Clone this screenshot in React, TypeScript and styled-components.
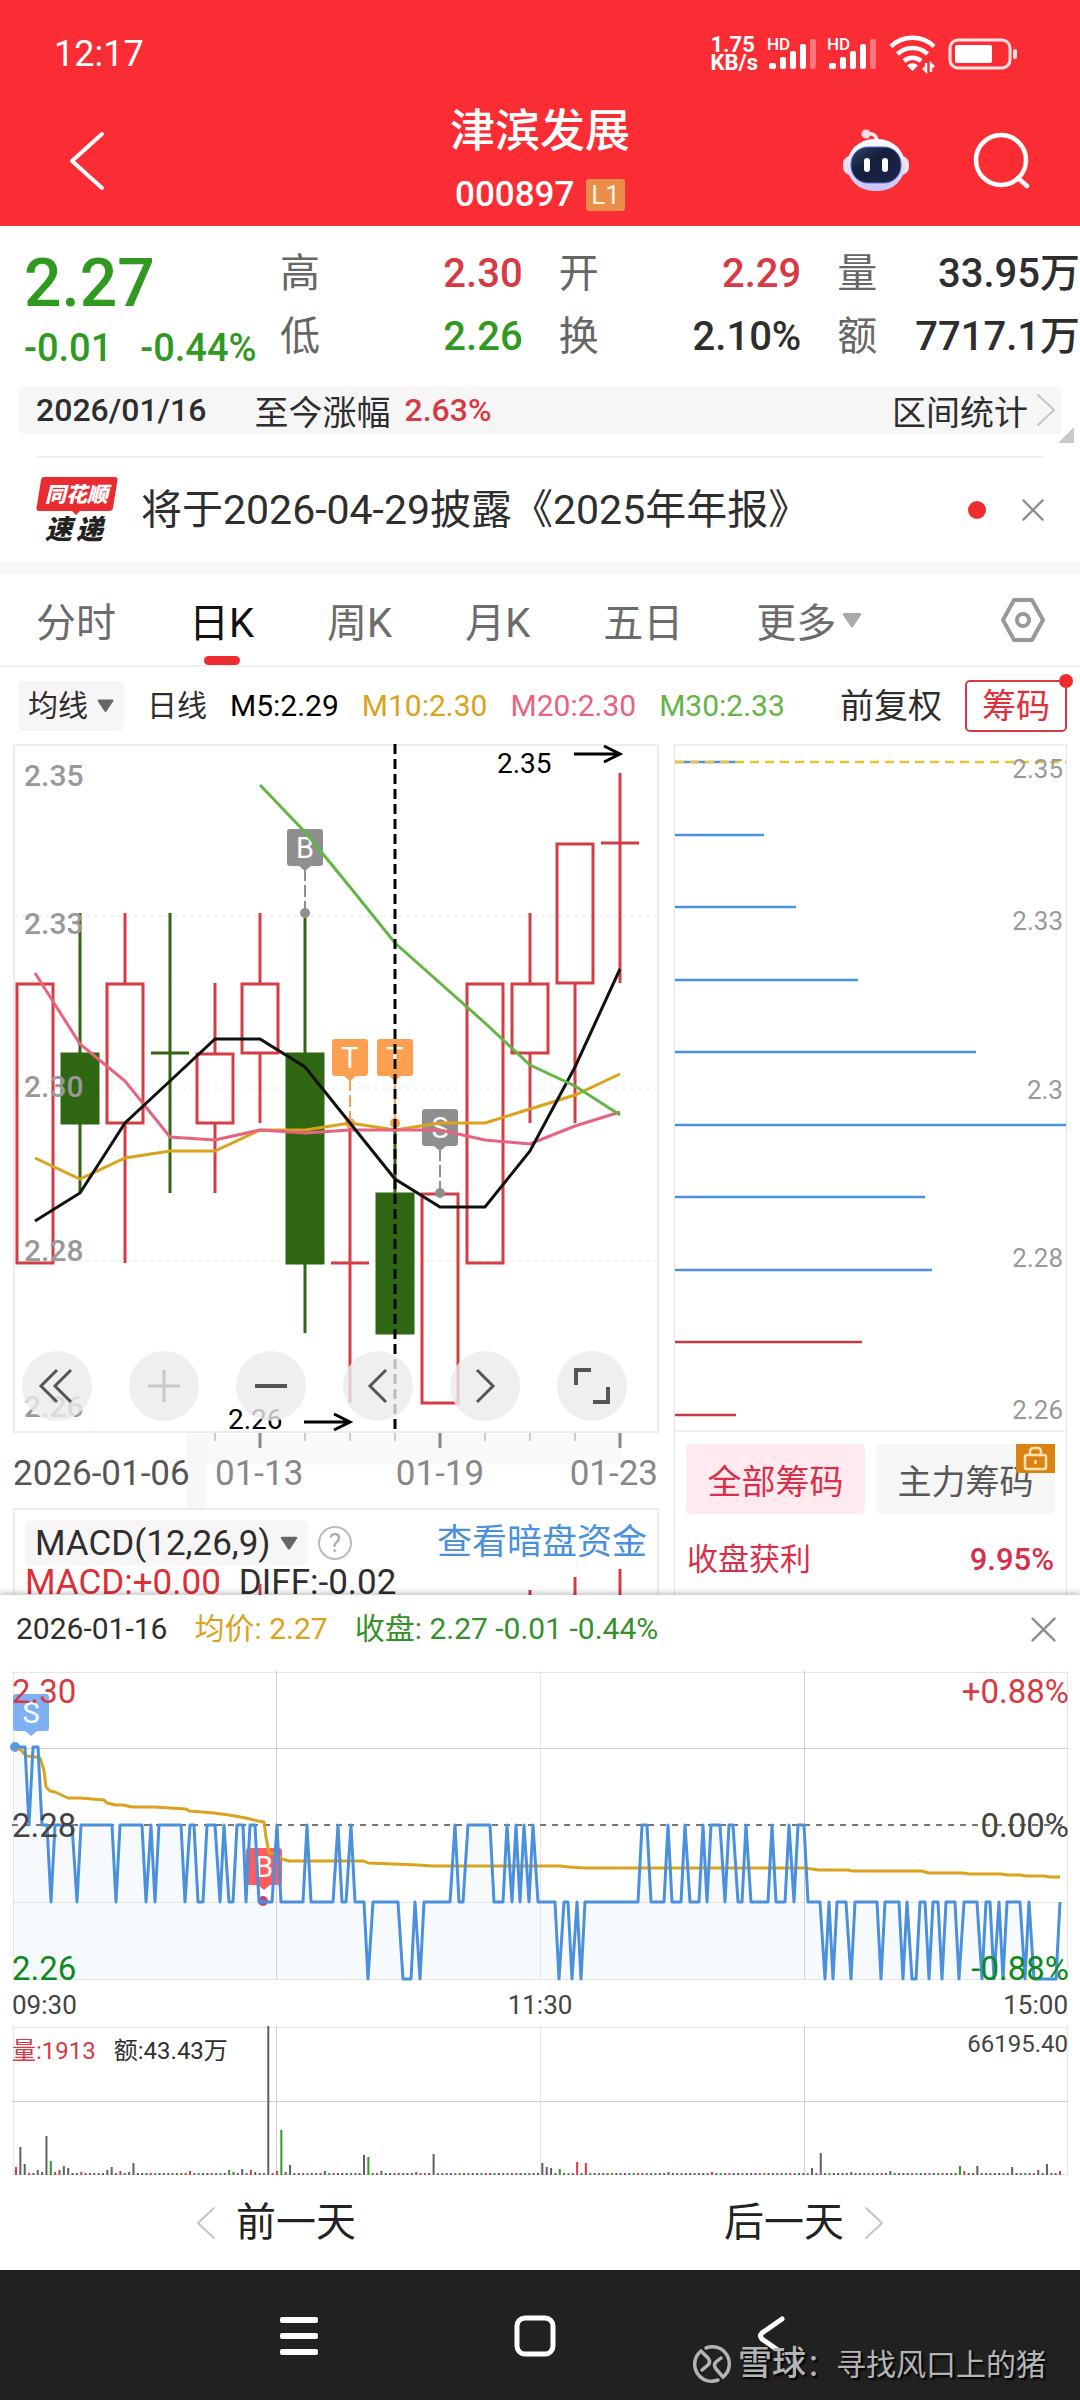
import React from "react";
import styled, { createGlobalStyle } from "styled-components";

const RED = "#d83a44";
const GREEN = "#2f9a1f";
const AMBER = "#dba21c";
const INK = "#2e2e2e";
const BLUE = "#4a90dd";
const FONT = 'Roboto, "Noto Sans CJK SC", sans-serif';

const GlobalStyle = createGlobalStyle`
  * { box-sizing: border-box; }
  body { margin: 0; background: #fff; font-family: ${FONT}; color: ${INK}; }
  button, select { font: inherit; color: inherit; border: 0; background: none; padding: 0; margin: 0; cursor: pointer; }
  svg { display: block; overflow: visible; }
  svg text { font-family: ${FONT}; }
  a { color: inherit; text-decoration: none; }
  dl, dd, dt, h1, p { margin: 0; font-weight: inherit; }
`;

const Page = styled.div`
  display: flex;
  flex-direction: column;
  width: 100%;
  overflow: hidden;
`;

/* ---------- header ---------- */

const Header = styled.header`
  background: #fa2d34;
  color: #fff;
  padding-bottom: 4px;
`;

const StatusBar = styled.div`
  display: flex;
  align-items: flex-end;
  justify-content: space-between;
  height: 76px;
  padding: 0 62px 0 54px;
`;

const Clock = styled.time`
  font-size: 36px;
  font-weight: 400;
  line-height: 44px;
`;

const StatusIcons = styled.div`
  display: flex;
  align-items: center;
  gap: 11px;
  height: 44px;
`;

const NetSpeed = styled.div`
  font-size: 22px;
  line-height: 18px;
  font-weight: 700;
`;

const TitleBar = styled.div`
  display: grid;
  grid-template-columns: 1fr auto 1fr;
  align-items: center;
  padding: 24px 50px 0;
`;

const IconButton = styled.button`
  display: flex;
  align-items: center;
`;

const BackButton = styled(IconButton)`
  padding-left: 18px;
`;

const TitleBlock = styled.div`
  display: flex;
  flex-direction: column;
  align-items: center;
`;

const Title = styled.h1`
  font-size: 45px;
  line-height: 64px;
  font-weight: 500;
`;

const CodeRow = styled.div`
  display: flex;
  align-items: center;
  gap: 12px;
  font-size: 35px;
  font-weight: 500;
  line-height: 54px;
  padding-top: 4px;
`;

const LevelBadge = styled.span`
  background: #ea8e4b;
  color: #fff3dc;
  border-radius: 3px;
  font-size: 26px;
  line-height: 32px;
  padding: 0 5px;
  font-weight: 400;
`;

const HeaderActions = styled.div`
  display: flex;
  align-items: center;
  justify-content: flex-end;
  gap: 62px;
`;

/* ---------- quote ---------- */

const Quote = styled.section`
  display: flex;
  padding-top: 16px;
  padding-bottom: 16px;
`;

const PriceBlock = styled.div`
  flex: 0 0 280px;
  padding-left: 24px;
  color: ${GREEN};
  font-weight: 500;
`;

const Price = styled.div`
  font-size: 66px;
  line-height: 84px;
`;

const Change = styled.div`
  display: flex;
  gap: 28px;
  font-size: 38px;
  line-height: 44px;
`;

const Stats = styled.dl`
  flex: 1;
  display: grid;
  grid-template-columns: repeat(3, 1fr);
  grid-template-rows: repeat(2, 63px);
  grid-auto-flow: column;
  column-gap: 36px;
`;

const Stat = styled.div<{ $color?: string }>`
  display: flex;
  justify-content: space-between;
  font-size: 40px;
  line-height: 63px;
  white-space: nowrap;
  dt { color: #666; }
  dd { color: ${(p) => p.$color || INK}; font-weight: 500; }
`;

const RangeBar = styled.div`
  position: relative;
  display: flex;
  align-items: center;
  justify-content: space-between;
  height: 48px;
  margin: 0 18px;
  padding: 0 6px 0 18px;
  background: #f6f6f7;
  border-radius: 6px;
  font-size: 34px;
`;

const RangeInfo = styled.div`
  display: flex;
  align-items: center;
`;

const RangeDate = styled.span`
  font-size: 32px;
  font-weight: 500;
  margin-right: 48px;
`;

const RangeGain = styled.span`
  color: ${RED};
  font-size: 32px;
  font-weight: 500;
  margin-left: 14px;
`;

const RangeLink = styled.a`
  display: flex;
  align-items: center;
  gap: 8px;
`;

const FoldCorner = styled.svg`
  position: absolute;
  right: -12px;
  bottom: -9px;
`;

const News = styled.section`
  display: flex;
  align-items: center;
  height: 106px;
  margin: 22px 36px 0;
  border-top: 2px solid #f0f0f0;
`;

const NewsLink = styled.a`
  flex: 1;
  margin-left: 22px;
  font-size: 41px;
  line-height: 60px;
`;

const NewsDot = styled.span`
  width: 18px;
  height: 18px;
  border-radius: 50%;
  background: #ee2d30;
  margin-right: 36px;
`;

/* ---------- tabs and indicators ---------- */

const Tabs = styled.nav`
  display: flex;
  align-items: center;
  gap: 73px;
  height: 105px;
  padding: 0 34px 0 36px;
  border-top: 12px solid #f7f7f7;
  border-bottom: 2px solid #f0f0f0;
`;

const Tab = styled.button<{ $active?: boolean }>`
  position: relative;
  display: flex;
  align-items: center;
  gap: 6px;
  height: 91px;
  font-size: 40px;
  color: ${(p) => (p.$active ? "#111" : "#6c6c6c")};
  &::after {
    content: "";
    display: ${(p) => (p.$active ? "block" : "none")};
    position: absolute;
    bottom: 0;
    left: 50%;
    margin-left: -18px;
    width: 36px;
    height: 9px;
    border-radius: 5px;
    background: #ee2d30;
  }
`;

const TabSettings = styled(IconButton)`
  margin-left: auto;
`;

const Legend = styled.div`
  display: flex;
  align-items: center;
  height: 77px;
  padding: 0 13px 0 18px;
  gap: 23px;
  font-size: 30px;
  line-height: 44px;
  white-space: nowrap;
`;

const Picker = styled.label<{ $height: number; $size: number }>`
  display: inline-flex;
  align-items: center;
  gap: 9px;
  height: ${(p) => p.$height}px;
  padding: 0 10px;
  background: #f7f5f6;
  border-radius: 6px;
  font-size: ${(p) => p.$size}px;
  select { appearance: none; outline: 0; }
`;

const MaValue = styled.span<{ $color: string }>`
  color: ${(p) => p.$color};
`;

const Adjust = styled.button`
  margin-left: auto;
  font-size: 34px;
`;

const ChipToggle = styled.button`
  position: relative;
  height: 52px;
  padding: 0 15px;
  border: 2px solid ${RED};
  border-radius: 5px;
  color: #e0303c;
  font-size: 34px;
  line-height: 46px;
  &::after {
    content: "";
    position: absolute;
    top: -8px;
    right: -8px;
    width: 14px;
    height: 14px;
    border-radius: 50%;
    background: #ee2d30;
  }
`;

/* ---------- chart area ---------- */

const ChartArea = styled.main`
  display: grid;
  grid-template-columns: 646fr 393fr;
  gap: 15px;
  padding: 0 13px;
`;

const ChartColumn = styled.div`
  display: flex;
  flex-direction: column;
  min-width: 0;
`;

const CandleWrap = styled.div`
  position: relative;
`;

const FullSvg = styled.svg`
  width: 100%;
  height: auto;
`;

const ChartControls = styled.div`
  position: absolute;
  left: 9px;
  bottom: 87px;
  display: flex;
  gap: 37px;
`;

const RoundButton = styled.button`
  width: 70px;
  height: 70px;
  border-radius: 50%;
  background: rgba(235, 235, 235, 0.8);
  display: flex;
  align-items: center;
  justify-content: center;
`;

const MacdPanel = styled.section`
  position: relative;
  height: 87px;
  overflow: hidden;
  border: 2px solid #ececec;
  border-bottom: 0;
  padding: 10px 10px 0;
`;

const MacdHead = styled.div`
  display: flex;
  align-items: center;
  gap: 10px;
  height: 46px;
`;

const HelpButton = styled.button`
  width: 34px;
  height: 34px;
  border: 2px solid #bbb;
  border-radius: 50%;
  color: #aaa;
  font-size: 26px;
  line-height: 30px;
`;

const DarkPoolLink = styled.a`
  margin-left: auto;
  color: ${BLUE};
  font-size: 35px;
  line-height: 46px;
`;

const MacdValues = styled.p`
  display: flex;
  gap: 18px;
  font-size: 35px;
  line-height: 34px;
  span:first-child { color: #dd3036; }
`;

const MacdBars = styled.svg`
  position: absolute;
  left: 0;
  bottom: 0;
  width: 100%;
  height: 26px;
`;

const ChipPanel = styled.section`
  border-left: 1px solid #e4e4e4;
  border-right: 1px solid #e4e4e4;
  flex: 1;
`;

const ChipTabs = styled.div`
  display: grid;
  grid-template-columns: 1fr 1fr;
  gap: 11px;
  padding: 12px 11px 0;
`;

const ChipTab = styled.button<{ $active?: boolean }>`
  position: relative;
  height: 70px;
  border-radius: 5px;
  font-size: 34px;
  background: ${(p) => (p.$active ? "#ffeaef" : "#f6f6f6")};
  color: ${(p) => (p.$active ? "#d8304a" : "#585858")};
`;

const LockBadge = styled.svg`
  position: absolute;
  top: 0;
  right: 0;
`;

const ProfitRow = styled.p`
  display: flex;
  justify-content: space-between;
  padding: 0 12px;
  margin-top: 22px;
  color: #d8304a;
  font-size: 31px;
  line-height: 48px;
  b { font-weight: 500; }
`;

/* ---------- bottom sheet ---------- */

const Sheet = styled.section`
  position: relative;
  background: #fff;
  padding: 0 12px;
  box-shadow: 0 -2px 6px rgba(0, 0, 0, 0.25);
`;

const SheetHead = styled.div`
  display: flex;
  align-items: center;
  gap: 27px;
  height: 68px;
  padding: 0 12px 0 4px;
  margin-bottom: 8px;
  font-size: 30px;
  line-height: 44px;
  white-space: nowrap;
`;

const SheetValue = styled.span<{ $color: string }>`
  color: ${(p) => p.$color};
`;

const SheetClose = styled(IconButton)`
  margin-left: auto;
`;

const TimeAxis = styled.div`
  display: flex;
  justify-content: space-between;
  height: 46px;
  padding-top: 10px;
  font-size: 26px;
  line-height: 30px;
  color: #444;
`;

const VolumeWrap = styled.div`
  position: relative;
`;

const VolumeLabels = styled.div`
  position: absolute;
  top: 0;
  left: 0;
  right: 0;
  display: flex;
  align-items: flex-start;
  gap: 18px;
  font-size: 24px;
  line-height: 34px;
  padding-top: 8px;
`;

const VolumeValue = styled.span`
  color: ${RED};
`;

const VolumeMax = styled.span`
  margin-left: auto;
  line-height: 20px;
  color: #444;
`;

const DayNav = styled.div`
  display: grid;
  grid-template-columns: 1fr 1fr;
  justify-items: center;
  align-items: center;
  height: 95px;
`;

const DayButton = styled.button`
  display: flex;
  align-items: center;
  gap: 20px;
  font-size: 40px;
  line-height: 56px;
  color: #222;
`;

const SystemNav = styled.footer`
  position: relative;
  display: flex;
  justify-content: center;
  align-items: center;
  gap: 192px;
  height: 131px;
  padding-right: 10px;
  background: #212121;
`;

const SystemButton = styled.button`
  display: flex;
  align-items: center;
  justify-content: center;
  width: 44px;
  height: 44px;
`;

const Credit = styled.div`
  position: absolute;
  right: 34px;
  bottom: 12px;
  display: flex;
  align-items: center;
  gap: 7px;
  color: #b4b4b4;
  font-size: 30px;
  line-height: 48px;
  text-shadow: 2px 2px 2px #000;
  strong { font-size: 34px; font-weight: 500; }
`;

/* ---------- icons ---------- */

const Signal = () => (
  <svg width="49" height="36" viewBox="0 0 49 36" fill="#fff">
    <text x="-2" y="14" fontSize="17" fontWeight="500">HD</text>
    <rect x="0" y="27" width="7" height="6" rx="2" />
    <rect x="11" y="21" width="6" height="12" rx="2" />
    <rect x="21" y="15" width="6" height="18" rx="2" />
    <rect x="31" y="8" width="6" height="25" rx="2" />
    <rect x="41" y="3" width="6" height="30" rx="2" opacity="0.35" />
  </svg>
);

const Wifi = () => (
  <svg width="48" height="38" viewBox="0 0 48 38" fill="none" stroke="#fff" strokeWidth="4.500">
    <path d="M2 11.5 A31 31 0 0 1 45 11.5" />
    <path d="M8.500 19 A22 22 0 0 1 38.500 19" />
    <path d="M15 26 A13 13 0 0 1 32 26" />
    <path d="M23.500 36 L18 30.500 A8 8 0 0 1 29 30.500 Z" fill="#fff" stroke="none" />
    <path d="M37 28 V36 L34 33 M42 37 V29 L45 32" strokeWidth="2.500" />
  </svg>
);

const Battery = () => (
  <svg width="70" height="32" viewBox="0 0 70 32" fill="none">
    <rect x="2" y="2" width="60" height="28" rx="8" stroke="#ffe3e3" strokeWidth="3" />
    <rect x="7" y="7" width="37" height="18" rx="2" fill="#fff" />
    <rect x="65" y="11" width="4" height="10" rx="2" fill="#ffe3e3" />
  </svg>
);

const Chevron = ({ w, h, color, sw, right }: { w: number; h: number; color: string; sw: number; right?: boolean }) => (
  <svg width={w} height={h} viewBox={`0 0 ${w} ${h}`} fill="none" stroke={color} strokeWidth={sw} strokeLinecap="round" strokeLinejoin="round">
    <path d={right ? `M${sw} ${sw} L${w - sw} ${h / 2} L${sw} ${h - sw}` : `M${w - sw} ${sw} L${sw} ${h / 2} L${w - sw} ${h - sw}`} />
  </svg>
);

const Cross = ({ size }: { size: number }) => (
  <svg width={size} height={size} viewBox="0 0 24 24" stroke="#8f8f8f" strokeWidth="2.500" strokeLinecap="round">
    <path d="M1.500 1.500 L22.500 22.500 M22.500 1.500 L1.500 22.500" />
  </svg>
);

const Caret = ({ size, color }: { size: number; color: string }) => (
  <svg width={size} height={size} viewBox="0 0 20 20" fill={color}>
    <path d="M2 3 H18 Q20 3 19 5 L11 17 Q10 18 9 17 L1 5 Q0 3 2 3 Z" />
  </svg>
);

const Robot = () => (
  <svg width="68" height="64" viewBox="0 0 68 64">
    <defs>
      <linearGradient id="shell" x1="0" y1="0" x2="0" y2="1">
        <stop offset="0" stopColor="#ffffff" />
        <stop offset="0.55" stopColor="#e4dcfb" />
        <stop offset="1" stopColor="#c4c4fa" />
      </linearGradient>
      <linearGradient id="visor" x1="0" y1="0" x2="1" y2="1">
        <stop offset="0" stopColor="#2d4668" />
        <stop offset="0.4" stopColor="#161f3c" />
        <stop offset="1" stopColor="#1b2450" />
      </linearGradient>
    </defs>
    <path d="M24 5 Q34 3 35 12" fill="none" stroke="#ffe6ee" strokeWidth="3.500" />
    <circle cx="24" cy="5" r="4.500" fill="#ffdfe6" />
    <rect x="1" y="27" width="66" height="19" rx="8" fill="#efe2f7" />
    <rect x="5" y="10" width="58" height="52" rx="27" fill="url(#shell)" />
    <rect x="9" y="18" width="50" height="36" rx="17" fill="url(#visor)" stroke="#5a6fd0" strokeWidth="1" />
    <rect x="22" y="29" width="6" height="14" rx="3" fill="#fff" />
    <rect x="40" y="29" width="6" height="14" rx="3" fill="#fff" />
  </svg>
);

const SearchIcon = () => (
  <svg width="58" height="58" viewBox="0 0 58 58" fill="none" stroke="#fff" strokeWidth="4.500" strokeLinecap="round">
    <circle cx="29" cy="28" r="25" />
    <path d="M46 46 L55 54" />
  </svg>
);

const NewsLogo = () => (
  <svg width="83" height="68" viewBox="0 0 83 68">
    <path d="M8 1 H79 Q82 1 81.500 4 L77 32 Q76.500 35 73 35 H44 L40 39 L36 35 H3 Q0 35 0.500 32 L5 4 Q5.500 1 8 1 Z" fill="#ea2c30" />
    <text x="9" y="26" fontSize="21" fontWeight="900" fontStyle="italic" fill="#fff">同花顺</text>
    <text x="9" y="63" fontSize="27" fontWeight="900" fontStyle="italic" fill="#222">速</text>
    <text x="40" y="63" fontSize="27" fontWeight="900" fontStyle="italic" fill="#222">递</text>
  </svg>
);

const Hexagon = () => (
  <svg width="46" height="44" viewBox="0 0 46 44" fill="none" stroke="#999" strokeWidth="4" strokeLinejoin="round">
    <path d="M14 2 H32 L43 22 L32 42 H14 L3 22 Z" />
    <circle cx="23" cy="22" r="6" />
  </svg>
);

/* ---------- daily candles ---------- */

type Candle = { open: number; close: number; high: number; low: number };

const candles: Candle[] = [
  { open: 2.28, close: 2.32, high: 2.32, low: 2.28 },
  { open: 2.31, close: 2.3, high: 2.33, low: 2.29 },
  { open: 2.3, close: 2.32, high: 2.33, low: 2.28 },
  { open: 2.31, close: 2.31, high: 2.33, low: 2.29 },
  { open: 2.3, close: 2.31, high: 2.32, low: 2.29 },
  { open: 2.31, close: 2.32, high: 2.33, low: 2.3 },
  { open: 2.31, close: 2.28, high: 2.33, low: 2.27 },
  { open: 2.28, close: 2.28, high: 2.3, low: 2.26 },
  { open: 2.29, close: 2.27, high: 2.3, low: 2.27 },
  { open: 2.26, close: 2.29, high: 2.29, low: 2.26 },
  { open: 2.28, close: 2.32, high: 2.32, low: 2.28 },
  { open: 2.31, close: 2.32, high: 2.33, low: 2.3 },
  { open: 2.32, close: 2.34, high: 2.34, low: 2.3 },
  { open: 2.34, close: 2.34, high: 2.35, low: 2.32 },
];

const averages = [
  { color: AMBER, from: 0, values: [2.295, 2.292, 2.295, 2.296, 2.296, 2.299, 2.299, 2.3, 2.299, 2.3, 2.3, 2.302, 2.304, 2.307] },
  { color: "#e8637f", from: 0, values: [2.3214, 2.3113, 2.306, 2.298, 2.2976, 2.299, 2.2986, 2.299, 2.299, 2.299, 2.2976, 2.297, 2.2996, 2.3016] },
  { color: "#111", from: 0, values: [2.286, 2.29, 2.3, 2.306, 2.312, 2.312, 2.308, 2.3, 2.292, 2.288, 2.288, 2.296, 2.308, 2.322] },
  { color: "#63b545", from: 5, values: [2.3483, 2.3416, 2.3337, 2.3257, 2.32, 2.3143, 2.3083, 2.3053, 2.3012] },
];

const dayX = (i: number) => 22 + i * 45;
const priceY = (p: number) => Math.round(659 - (p - 2.26) * 7000);

const CandleShape = ({ c, i }: { c: Candle; i: number }) => {
  const x = dayX(i);
  const falling = c.close < c.open || i === 3;
  const color = falling ? "#2f6712" : "#d43d43";
  const top = priceY(Math.max(c.open, c.close));
  const bottom = priceY(Math.min(c.open, c.close));
  return (
    <g stroke={color} strokeWidth="3">
      {c.high > Math.max(c.open, c.close) && <path d={`M${x} ${priceY(c.high)} V${top}`} />}
      {c.low < Math.min(c.open, c.close) && <path d={`M${x} ${bottom} V${priceY(c.low)}`} />}
      {top === bottom ? (
        <path d={`M${x - 19} ${top} H${x + 19}`} />
      ) : (
        <rect x={x - 18} y={top + 1} width="36" height={bottom - top - 1} fill={falling ? color : "none"} />
      )}
    </g>
  );
};

const Marker = ({ x, y, letter, color }: { x: number; y: number; letter: string; color: string }) => (
  <g>
    <path d={`M${x - 15} ${y} h30 q3 0 3 3 v31 q0 3 -3 3 h-9 l-6 5 l-6 -5 h-9 q-3 0 -3 -3 v-31 q0 -3 3 -3 Z`} fill={color} />
    <text x={x} y={y + 29} textAnchor="middle" fontSize="29" fill="#fff">{letter}</text>
  </g>
);

const trades = [
  { day: 6, top: 85, at: 2.33, letter: "B", color: "#8f8f8f" },
  { day: 7, top: 295, at: 2.3, letter: "T", color: "#fc9f50" },
  { day: 8, top: 295, at: 2.3, letter: "T", color: "#fc9f50" },
  { day: 9, top: 365, at: 2.29, letter: "S", color: "#8f8f8f" },
];

const CandleChart = () => (
  <FullSvg viewBox="0 0 646 764" role="img" aria-label="日K">
    <rect x="174" y="690" width="434" height="30" fill="#faf8f8" />
    <rect x="174" y="690" width="20" height="74" fill="#f8f7f7" />
    <rect x="1" y="1" width="644" height="687" fill="none" stroke="#ececec" strokeWidth="2" />
    <path d="M1 172 H645 M1 344 H645 M1 517 H645" stroke="#e6e6e6" strokeDasharray="4 4" />
    {candles.map((c, i) => <CandleShape key={i} c={c} i={i} />)}
    <g fill="#999" fontSize="30" fontWeight="500">
      <text x="11" y="42">2.35</text>
      <text x="11" y="190">2.33</text>
      <text x="11" y="353">2.30</text>
      <text x="11" y="517">2.28</text>
      <text x="11" y="673">2.26</text>
    </g>
    {trades.map((t) => (
      <g key={t.day}>
        <path d={`M${dayX(t.day)} ${t.top + 40} V${priceY(t.at)}`} stroke={t.color} strokeWidth="2" strokeDasharray="12 4" />
        <circle cx={dayX(t.day)} cy={priceY(t.at)} r="5" fill={t.color} />
        <Marker x={dayX(t.day)} y={t.top} letter={t.letter} color={t.color} />
      </g>
    ))}
    {averages.map((a) => (
      <polyline
        key={a.color}
        fill="none"
        stroke={a.color}
        strokeWidth="3"
        points={a.values.map((v, i) => `${dayX(i + a.from)},${priceY(v)}`).join(" ")}
      />
    ))}
    <path d="M382 0 V688" stroke="#000" strokeWidth="3" strokeDasharray="10 5" />
    <g fontSize="28" fill="#000">
      <text x="484" y="29">2.35</text>
      <text x="215" y="685">2.26</text>
    </g>
    <g fill="none" stroke="#000" strokeWidth="3">
      <path d="M561 10 H607 M591 2 L607 10 L591 18" />
      <path d="M291 678 H337 M321 670 L337 678 L321 686" />
    </g>
    <path d="M247 689 V704 M427 689 V704 M607 689 V704" stroke="#888" strokeWidth="3" />
    <path d="M202 689 V697 M292 689 V697 M337 689 V697 M382 689 V697 M472 689 V697 M517 689 V697 M562 689 V697" stroke="#ccc" strokeWidth="2" />
    <g fontSize="35" fill="#888">
      <text x="0" y="741" fill="#555">2026-01-06</text>
      <text x="202" y="741">01-13</text>
      <text x="427" y="741" textAnchor="middle">01-19</text>
      <text x="645" y="741" textAnchor="end">01-23</text>
    </g>
  </FullSvg>
);

/* ---------- chip distribution ---------- */

const chips = [61, 89, 121, 183, 301, 393, 250, 257, 187, 61];

const ChipChart = () => (
  <FullSvg viewBox="0 0 391 688" role="img" aria-label="筹码分布">
    <path d="M0 1 H391 M0 687 H391" stroke="#e4e4e4" />
    {chips.map((len, i) => (
      <path key={i} d={`M0 ${18 + Math.round(i * 72.5)} h${Math.min(len, 391)}`} stroke={i > 7 ? "#c73a44" : BLUE} strokeWidth="2.500" />
    ))}
    <path d="M0 18 H391" stroke="#edc22e" strokeWidth="2.500" strokeDasharray="9 6" />
    <g fill="#999" fontSize="26" textAnchor="end">
      <text x="388" y="34">2.35</text>
      <text x="388" y="186">2.33</text>
      <text x="388" y="355">2.3</text>
      <text x="388" y="523">2.28</text>
      <text x="388" y="675">2.26</text>
    </g>
  </FullSvg>
);

/* ---------- intraday ---------- */

const levels: Record<string, number> = { A: 76, B: 154, C: 231, D: 308 };

const ticks =
  "3A 13A 17B 21A 26A 30B 35B 39C 43B 60B 65C 69B 100B 104C 108B 130B 134C 139B 143C 147B 169B 173C 178B 182B 186C 191C 195B 203B 208C 212B 217C 221C 225B 231B 234C 238B 243B 247C 260C 265B 269C 291C 295B 299C 321C 326B 330C 334C 339B 343C 352C 356D 361C 386C 391D 399D 403C 408D 412C 438C 443B 447C 451C 456B 478B 482C 491C 495B 500C 504B 508C 512B 517C 521B 526C 543C 547D 552C 556C 560D 565C 569D 573C 626C 630B 635B 639C 652C 656B 660C 669C 673B 678C 687C 691B 695C 699B 708B 713C 717B 721B 726C 730C 734B 739C 756C 760B 764C 773C 777B 782C 786B 792B 796C 808C 813D 817C 821D 825C 834C 839D 843C 865C 869D 873C 887C 891D 895C 900D 904D 908C 913C 917D 921C 926C 930D 934C 943C 947D 952C 965C 970D 974C 978C 982D 987C 991D 995C 1008C 1013D 1017C 1022D 1044D 1048C";

const pricePoints = ticks
  .split(" ")
  .map((t) => `${t.slice(0, -1)},${levels[t.slice(-1)]}`)
  .join(" ");

const averagePoints =
  "3,76 9,79 14,85 24,86 28,87 32,99 34,116 38,120 43,121 56,127 68,127 92,129 95,132 104,134 111,134 120,136 142,136 174,138 177,140 202,142 217,144 234,147 246,150 252,151 254,166 257,182 265,183 270,188 277,190 352,190 356,192 406,194 420,195 548,195 557,196 574,197 792,197 807,199 836,199 840,200 910,200 917,202 952,202 957,203 989,203 996,204 1008,204 1014,205 1032,205 1038,206 1048,206";

const IntradayChart = () => (
  <FullSvg viewBox="0 0 1056 309" role="img" aria-label="分时走势">
    <polygon points={`3,308 ${pricePoints} 1048,308`} fill="#f6fafd" />
    <path d="M0 1 H1056 M0 231 H1056 M0 308 H1056 M1 0 V308 M528 0 V308 M1055 0 V308" stroke="#e6e6e6" fill="none" shapeRendering="crispEdges" />
    <path d="M0 77 H1056 M264 0 V308 M792 0 V308" stroke="#d0d0d0" fill="none" shapeRendering="crispEdges" />
    <path d="M0 154 H1056" stroke="#777" strokeWidth="2" strokeDasharray="6 6" />
    <circle cx="3" cy="76" r="5" fill="#5b9bea" />
    <circle cx="251" cy="230" r="5" fill="#c4477a" />
    <Marker x={19} y={23} letter="S" color="#7fb0f3" />
    <Marker x={252} y={177} letter="B" color="#ff5c62" />
    <polyline points={averagePoints} fill="none" stroke={AMBER} strokeWidth="3" strokeLinejoin="round" />
    <polyline points={pricePoints} fill="none" stroke={BLUE} strokeWidth="3" strokeLinejoin="round" />
    <g fontSize="33">
      <text x="0" y="32" fill={RED}>2.30</text>
      <text x="0" y="166" fill="#444">2.28</text>
      <text x="0" y="309" fill="#0d8a1c">2.26</text>
      <g textAnchor="end">
        <text x="1057" y="32" fill={RED}>+0.88%</text>
        <text x="1057" y="166" fill="#444">0.00%</text>
        <text x="1057" y="309" fill="#0d8a1c">-0.88%</text>
      </g>
    </g>
  </FullSvg>
);

/* minute index, height, and r/g for rising or falling minutes */
const spikes: [number, number, string?][] = [
  [0, 8, "r"], [1, 28], [2, 11], [5, 5], [6, 3], [7, 39], [8, 14, "g"], [9, 3, "r"], [10, 5], [11, 9], [12, 7], [15, 3, "r"],
  [21, 5], [22, 8], [24, 4, "r"], [26, 3], [27, 12], [40, 4, "r"], [49, 5, "g"], [50, 3], [52, 6], [54, 5, "r"], [55, 3],
  [58, 149], [60, 4, "r"], [61, 45, "g"], [62, 3], [63, 10], [71, 4], [80, 20], [81, 18, "g"], [84, 4], [92, 3, "r"], [96, 21],
  [121, 12], [122, 8], [123, 7], [125, 6, "g"], [129, 13, "r"], [131, 12, "r"], [150, 3], [160, 3, "r"], [183, 7], [185, 22],
  [192, 3], [201, 4], [217, 9, "g"], [218, 4, "r"], [221, 9], [229, 8], [235, 5], [237, 11], [240, 4, "r"],
];

const VolumeChart = () => {
  const byMinute = new Map(spikes.map((s) => [s[0], s] as const));
  return (
    <FullSvg viewBox="0 0 1056 149" role="img" aria-label="成交量">
      <path d="M0 1 H1056 M0 148 H1056 M1 0 V149 M528 0 V149 M1055 0 V149" stroke="#e6e6e6" shapeRendering="crispEdges" />
      <path d="M0 75 H1056 M264 0 V149 M792 0 V149" stroke="#d0d0d0" shapeRendering="crispEdges" />
      {Array.from({ length: 241 }, (_, i) => {
        const spike = byMinute.get(i);
        const h = spike ? spike[1] : 2;
        const kind = spike ? spike[2] : i % 7 === 3 ? "r" : i % 5 === 2 ? "g" : undefined;
        const color = kind === "r" ? RED : kind === "g" ? GREEN : "#606060";
        return <rect key={i} x={3 + i * 4.35} y={149 - h} width="2" height={h} fill={color} />;
      })}
    </FullSvg>
  );
};

/* ---------- page ---------- */

export default function App() {
  return (
    <Page>
      <GlobalStyle />
      <Header>
        <StatusBar>
          <Clock>12:17</Clock>
          <StatusIcons>
            <NetSpeed>1.75<br />KB/s</NetSpeed>
            <Signal />
            <Signal />
            <Wifi />
            <Battery />
          </StatusIcons>
        </StatusBar>
        <TitleBar>
          <BackButton aria-label="返回"><Chevron w={38} h={62} sw={4} color="#fff" /></BackButton>
          <TitleBlock>
            <Title>津滨发展</Title>
            <CodeRow>000897 <LevelBadge>L1</LevelBadge></CodeRow>
          </TitleBlock>
          <HeaderActions>
            <IconButton aria-label="智能助手"><Robot /></IconButton>
            <IconButton aria-label="搜索"><SearchIcon /></IconButton>
          </HeaderActions>
        </TitleBar>
      </Header>

      <Quote>
        <PriceBlock>
          <Price>2.27</Price>
          <Change><span>-0.01</span><span>-0.44%</span></Change>
        </PriceBlock>
        <Stats>
          <Stat $color={RED}><dt>高</dt><dd>2.30</dd></Stat>
          <Stat $color={GREEN}><dt>低</dt><dd>2.26</dd></Stat>
          <Stat $color={RED}><dt>开</dt><dd>2.29</dd></Stat>
          <Stat><dt>换</dt><dd>2.10%</dd></Stat>
          <Stat><dt>量</dt><dd>33.95万</dd></Stat>
          <Stat><dt>额</dt><dd>7717.1万</dd></Stat>
        </Stats>
      </Quote>

      <RangeBar>
        <RangeInfo>
          <RangeDate>2026/01/16</RangeDate>
          <span>至今涨幅</span>
          <RangeGain>2.63%</RangeGain>
        </RangeInfo>
        <RangeLink href="#range">区间统计<Chevron w={20} h={34} sw={2} color="#c4c4c4" right /></RangeLink>
        <FoldCorner width="16" height="16" viewBox="0 0 16 16"><path d="M16 0 V16 H0 Z" fill="#c8c8c8" /></FoldCorner>
      </RangeBar>

      <News>
        <NewsLogo />
        <NewsLink href="#news">将于2026-04-29披露《2025年年报》</NewsLink>
        <NewsDot />
        <IconButton aria-label="关闭公告"><Cross size={22} /></IconButton>
      </News>

      <Tabs>
        <Tab>分时</Tab>
        <Tab $active>日K</Tab>
        <Tab>周K</Tab>
        <Tab>月K</Tab>
        <Tab>五日</Tab>
        <Tab aria-haspopup="menu">更多<Caret size={20} color="#aaa" /></Tab>
        <TabSettings aria-label="设置"><Hexagon /></TabSettings>
      </Tabs>

      <Legend>
        <Picker $height={50} $size={30}>
          <select aria-label="主图指标"><option>均线</option></select>
          <Caret size={17} color="#666" />
        </Picker>
        <span>日线</span>
        <MaValue $color="#000">M5:2.29</MaValue>
        <MaValue $color={AMBER}>M10:2.30</MaValue>
        <MaValue $color="#e8637f">M20:2.30</MaValue>
        <MaValue $color="#63b545">M30:2.33</MaValue>
        <Adjust>前复权</Adjust>
        <ChipToggle>筹码</ChipToggle>
      </Legend>

      <ChartArea>
        <ChartColumn>
          <CandleWrap>
            <CandleChart />
            <ChartControls>
              <RoundButton aria-label="快退">
                <svg width="36" height="36" viewBox="0 0 36 36" fill="none" stroke="#555" strokeWidth="3"><path d="M18 2 L2 18 L18 34 M32 2 L16 18 L32 34" /></svg>
              </RoundButton>
              <RoundButton aria-label="放大" disabled>
                <svg width="34" height="34" viewBox="0 0 34 34" stroke="#c8c8c8" strokeWidth="3"><path d="M17 1 V33 M1 17 H33" /></svg>
              </RoundButton>
              <RoundButton aria-label="缩小">
                <svg width="34" height="34" viewBox="0 0 34 34" stroke="#555" strokeWidth="4"><path d="M1 17 H33" /></svg>
              </RoundButton>
              <RoundButton aria-label="左移">
                <svg width="20" height="36" viewBox="0 0 20 36" fill="none" stroke="#555" strokeWidth="3"><path d="M18 2 L2 18 L18 34" /></svg>
              </RoundButton>
              <RoundButton aria-label="右移">
                <svg width="20" height="36" viewBox="0 0 20 36" fill="none" stroke="#555" strokeWidth="3"><path d="M2 2 L18 18 L2 34" /></svg>
              </RoundButton>
              <RoundButton aria-label="全屏">
                <svg width="36" height="36" viewBox="0 0 36 36" fill="none" stroke="#555" strokeWidth="4"><path d="M2 17 V2 H17 M34 19 V34 H19" /></svg>
              </RoundButton>
            </ChartControls>
          </CandleWrap>
          <MacdPanel>
            <MacdHead>
              <Picker $height={46} $size={35}>
                <select aria-label="副图指标"><option>MACD(12,26,9)</option></select>
                <Caret size={18} color="#666" />
              </Picker>
              <HelpButton aria-label="帮助">?</HelpButton>
              <DarkPoolLink href="#funds">查看暗盘资金</DarkPoolLink>
            </MacdHead>
            <MacdValues><span>MACD:+0.00</span><span>DIFF:-0.02</span></MacdValues>
            <MacdBars viewBox="0 0 642 26" preserveAspectRatio="none">
              <path d="M245 15 V26 M515 21 V26 M560 8 V26 M605 0 V26" stroke="#d43d43" strokeWidth="3" />
            </MacdBars>
          </MacdPanel>
        </ChartColumn>
        <ChartColumn>
          <ChipPanel>
            <ChipChart />
            <ChipTabs>
              <ChipTab $active>全部筹码</ChipTab>
              <ChipTab>
                主力筹码
                <LockBadge width="39" height="29" viewBox="0 0 39 29">
                  <rect width="39" height="29" fill="#d98412" />
                  <g fill="none" stroke="#ffe2b0" strokeWidth="2.500">
                    <rect x="9" y="11" width="21" height="14" rx="2" />
                    <path d="M14 11 V8 Q14 4 18 4 H21 Q25 4 25 8 V11 M19.500 16 V20" />
                  </g>
                </LockBadge>
              </ChipTab>
            </ChipTabs>
            <ProfitRow><span>收盘获利</span><b>9.95%</b></ProfitRow>
          </ChipPanel>
        </ChartColumn>
      </ChartArea>

      <Sheet>
        <SheetHead>
          <span>2026-01-16</span>
          <SheetValue $color={AMBER}>均价: 2.27</SheetValue>
          <SheetValue $color="#35912a">收盘: 2.27 -0.01 -0.44%</SheetValue>
          <SheetClose aria-label="关闭"><Cross size={25} /></SheetClose>
        </SheetHead>
        <IntradayChart />
        <TimeAxis><span>09:30</span><span>11:30</span><span>15:00</span></TimeAxis>
        <VolumeWrap>
          <VolumeChart />
          <VolumeLabels>
            <VolumeValue>量:1913</VolumeValue>
            <span>额:43.43万</span>
            <VolumeMax>66195.40</VolumeMax>
          </VolumeLabels>
        </VolumeWrap>
        <DayNav>
          <DayButton><Chevron w={20} h={34} sw={2} color="#c4c4c4" />前一天</DayButton>
          <DayButton>后一天<Chevron w={20} h={34} sw={2} color="#c4c4c4" right /></DayButton>
        </DayNav>
      </Sheet>

      <SystemNav>
        <SystemButton aria-label="最近任务">
          <svg width="38" height="38" viewBox="0 0 38 38" fill="#fff">
            <rect y="0" width="38" height="6" rx="2" /><rect y="16" width="38" height="6" rx="2" /><rect y="32" width="38" height="6" rx="2" />
          </svg>
        </SystemButton>
        <SystemButton aria-label="主屏幕">
          <svg width="42" height="42" viewBox="0 0 42 42" fill="none" stroke="#fff" strokeWidth="5"><rect x="3" y="3" width="36" height="36" rx="8" /></svg>
        </SystemButton>
        <SystemButton aria-label="返回上一页">
          <svg width="28" height="40" viewBox="0 0 28 40" fill="none" stroke="#fff" strokeWidth="5" strokeLinecap="round"><path d="M25 3 L5 17 Q2 20 5 23 L25 37" /></svg>
        </SystemButton>
        <Credit>
          <svg width="38" height="38" viewBox="0 0 38 38" fill="none" stroke="#b4b4b4" strokeWidth="3.500" strokeLinecap="round">
            <path d="M13 3 A17 17 0 0 1 30 32 L23 24 Q20 20 23 17 L28 13" />
            <path d="M25 35 A17 17 0 0 1 8 6 L15 13 Q18 17 15 20 L9 25" />
          </svg>
          <span><strong>雪球</strong>：寻找风口上的猪</span>
        </Credit>
      </SystemNav>
    </Page>
  );
}
